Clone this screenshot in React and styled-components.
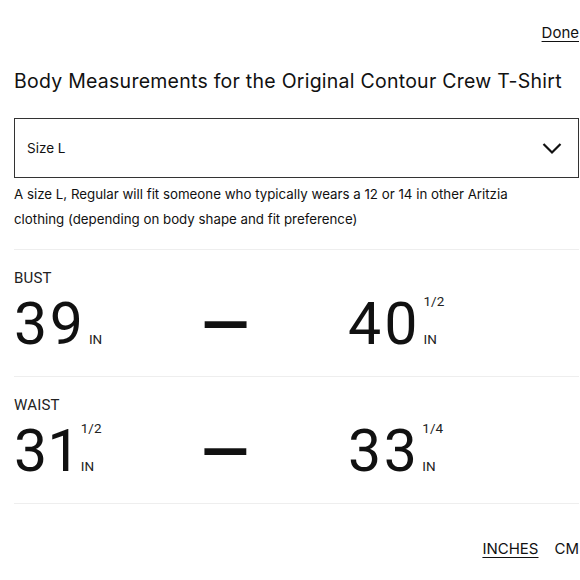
import React from "react";
import styled, { createGlobalStyle } from "styled-components";

const Global = createGlobalStyle`
  html, body { margin: 0; padding: 0; background: #fff; }
  body { font-family: "Inter", "Liberation Sans", sans-serif; color: #111; }
  * { box-sizing: border-box; }
`;

const Page = styled.div`
  width: 580px;
  height: 580px;
  padding: 0 1px 0 14px;
  display: flex;
  flex-direction: column;
  overflow: hidden;
`;

const TopBar = styled.div`
  display: flex;
  justify-content: flex-end;
  padding-top: 23px;
  height: 58px;
`;

const LinkText = styled.a`
  font-size: 15px;
  color: #111;
  text-decoration: ${(p) => (p.$active ? "underline" : "none")};
  text-underline-offset: 3px;
  cursor: pointer;
`;

const Title = styled.h1`
  margin: 0;
  font-size: 19.5px;
  font-weight: 400;
  line-height: 46px;
  letter-spacing: 0.25px;
  white-space: nowrap;
`;

const Select = styled.div`
  margin-top: 14px;
  height: 60px;
  border: 1px solid #333;
  display: flex;
  align-items: center;
  justify-content: space-between;
  padding: 0 16px 0 12px;
  font-size: 13.5px;
`;

const Note = styled.div`
  margin-top: 4px;
  padding-bottom: 17px;
  border-bottom: 1px solid #eee;
`;

const NoteText = styled.p`
  margin: 0;
  max-width: 500px;
  font-size: 13.3px;
  line-height: 25px;
`;

const Section = styled.div`
  height: 127px;
  border-bottom: 1px solid #eee;
  padding-top: 20px;
`;

const Label = styled.div`
  font-family: "Roboto", sans-serif;
  font-size: 15px;
  line-height: 16px;
  letter-spacing: 0.2px;
  color: #222;
`;

const Row = styled.div`
  display: flex;
  align-items: stretch;
  height: 44px;
  margin-top: 16px;
`;

const LeftPart = styled.div`
  width: 334px;
  display: flex;
  align-items: stretch;
`;

const DashCell = styled.div`
  flex: 1;
  display: flex;
  justify-content: center;
  align-items: center;
  height: 44px;
  font-family: "Roboto", sans-serif;
  font-size: 62px;
  font-weight: 700;
  line-height: 44px;
  padding-top: 2px;
`;

const Measure = styled.div`
  display: flex;
  align-items: stretch;
`;

const Num = styled.span`
  font-family: "Roboto", sans-serif;
  font-size: 59px;
  line-height: 44px;
  height: 44px;
  letter-spacing: 2.5px;
  font-variant-numeric: proportional-nums;
  font-feature-settings: "pnum" 1;
`;

const Side = styled.span`
  display: flex;
  flex-direction: column;
  justify-content: ${(p) => (p.$frac ? "space-between" : "flex-end")};
  margin-left: 3px;
  font-family: "Roboto", sans-serif;
  font-size: 13.5px;
  line-height: 13px;
  color: #222;
`;

const Frac = styled.span`
  margin-top: -7px;
`;

const Footer = styled.div`
  display: flex;
  justify-content: flex-end;
  gap: 16px;
  padding-top: 35px;
`;

const Chevron = () => (
  <svg width="20" height="13" viewBox="0 0 20 13" fill="none">
    <path d="M1.5 2 L10 10.5 L18.5 2" stroke="#111" strokeWidth="2.2" />
  </svg>
);

const Value = ({ n, frac }) => (
  <Measure>
    <Num>{n}</Num>
    <Side $frac={!!frac}>
      {frac && <Frac>{frac}</Frac>}
      <span>IN</span>
    </Side>
  </Measure>
);

const Metric = ({ label, from, to }) => (
  <Section>
    <Label>{label}</Label>
    <Row>
      <LeftPart>
        <Value n={from[0]} frac={from[1]} />
        <DashCell>—</DashCell>
      </LeftPart>
      <Value n={to[0]} frac={to[1]} />
    </Row>
  </Section>
);

export default function App() {
  return (
    <>
      <Global />
      <Page>
        <TopBar>
          <LinkText $active>Done</LinkText>
        </TopBar>
        <Title>Body Measurements for the Original Contour Crew T-Shirt</Title>
        <Select>
          <span>Size L</span>
          <Chevron />
        </Select>
        <Note>
          <NoteText>
            A size L, Regular will fit someone who typically wears a 12 or 14 in other Aritzia
            clothing (depending on body shape and fit preference)
          </NoteText>
        </Note>
        <Metric label="BUST" from={["39"]} to={["40", "1/2"]} />
        <Metric label="WAIST" from={["31", "1/2"]} to={["33", "1/4"]} />
        <Footer>
          <LinkText $active>INCHES</LinkText>
          <LinkText>CM</LinkText>
        </Footer>
      </Page>
    </>
  );
}
